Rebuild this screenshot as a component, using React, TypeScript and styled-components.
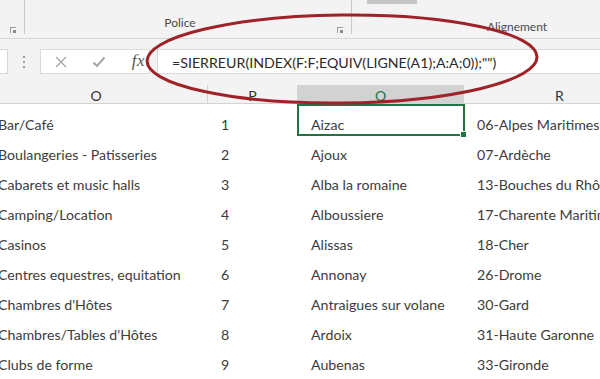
import styled, { createGlobalStyle } from 'styled-components';

const GlobalStyle = createGlobalStyle`
  html, body {
    margin: 0;
    padding: 0;
    background: #ffffff;
    overflow: hidden;
  }
  * {
    box-sizing: border-box;
  }
`;

const FONT = `Lato, 'Noto Sans', 'Liberation Sans', sans-serif`;

const Page = styled.div`
  position: relative;
  width: 600px;
  height: 379px;
  overflow: hidden;
  background: #ffffff;
  font-family: ${FONT};
`;

//------ ribbon

const Ribbon = styled.div`
  display: flex;
  height: 39px;
  background: #f3f3f3;
  border-bottom: 1px solid #d8d8d8;
`;

const RibbonGroup = styled.div<{ $width: number; $last?: boolean }>`
  position: relative;
  flex: 0 0 ${(p) => p.$width}px;
  display: flex;
  flex-direction: column;
  justify-content: flex-end;
  align-items: center;
  padding-bottom: 5px;
  border-right: ${(p) => (p.$last ? 'none' : '1px solid #c8c8c8')};
  margin: ${(p) => (p.$last ? '0' : '0 0 4px 0')};
`;

const GroupLabel = styled.span<{ $shift?: number }>`
  font-size: 12px;
  color: #4a4a4a;
  line-height: 12px;
  transform: translateX(${(p) => p.$shift ?? 0}px);
`;

const Launcher = styled.span`
  position: absolute;
  right: 8px;
  bottom: 1px;
  width: 6px;
  height: 6px;
  border-left: 1px solid #9a9a9a;
  border-top: 1px solid #9a9a9a;
  &::after {
    content: '';
    position: absolute;
    right: 0;
    bottom: 0;
    width: 3px;
    height: 3px;
    background: #8a8a8a;
  }
`;

const ButtonStub = styled.div`
  position: absolute;
  top: 0;
  left: 15px;
  width: 50px;
  height: 4px;
  background: #c6c6c6;
`;

//------ formula bar

const FormulaBar = styled.div`
  display: flex;
  align-items: center;
  height: 46px;
  padding: 10px 0 11px;
  background: #f3f3f3;
`;

const NameBox = styled.div`
  flex: 0 0 8px;
  height: 25px;
  background: #ffffff;
  border: 1px solid #d6d6d6;
  border-left: none;
`;

const Grip = styled.div`
  flex: 0 0 32px;
  display: flex;
  flex-direction: column;
  align-items: center;
  gap: 3px;
  & > span {
    width: 2px;
    height: 2px;
    background: #9c9c9c;
  }
`;

const ButtonsBox = styled.div`
  flex: 0 0 110px;
  height: 25px;
  display: flex;
  align-items: center;
  justify-content: space-between;
  padding: 0 4px 0 14px;
  background: #ffffff;
  border: 1px solid #dadada;
`;

const Fx = styled.span`
  font-family: 'Liberation Serif', 'DejaVu Serif', serif;
  font-style: italic;
  font-size: 17px;
  color: #555;
  letter-spacing: 0.5px;
  margin-top: -2px;
`;

const FormulaInput = styled.div`
  flex: 1;
  height: 25px;
  margin-left: 7px;
  background: #ffffff;
  border: 1px solid #dadada;
  border-right: none;
  padding: 2px 0 0 14px;
  display: flex;
  align-items: center;
  font-size: 14.2px;
  color: #2b2b2b;
  white-space: nowrap;
`;

//------ grid

const COLS = '223px 90px 166px 192px';

const SheetGrid = styled.div`
  margin-left: -15px;
  width: 671px;
`;

const HeaderRow = styled.div`
  display: grid;
  grid-template-columns: ${COLS};
  height: 19px;
  background: #f3f3f3;
  border-bottom: 1px solid #d4d4d4;
`;

const ColHead = styled.div<{ $active?: boolean }>`
  display: flex;
  align-items: center;
  justify-content: center;
  padding-top: 3px;
  font-size: 14px;
  line-height: 1;
  color: ${(p) => (p.$active ? '#217346' : '#333333')};
  background: ${(p) => (p.$active ? '#d2d2d2' : 'transparent')};
  border-right: 1px solid #d4d4d4;
`;

const Row = styled.div`
  display: grid;
  grid-template-columns: ${COLS};
  height: 30px;
`;

const Cell = styled.div`
  position: relative;
  display: flex;
  align-items: flex-end;
  padding: 0 0 2px 13px;
  font-size: 14.2px;
  line-height: 1;
  color: #3c3c3c;
  white-space: nowrap;
`;

const Selection = styled.div`
  position: absolute;
  inset: 0 -1px -2px -1px;
  border: 2px solid #217346;
  pointer-events: none;
  &::after {
    content: '';
    position: absolute;
    right: -4px;
    bottom: -4px;
    width: 5px;
    height: 5px;
    background: #217346;
    border: 1px solid #ffffff;
  }
`;

const Annotation = styled.svg`
  position: absolute;
  left: 0;
  top: 0;
  pointer-events: none;
`;

const rows: [string, string, string, string][] = [
  ['Bar/Café', '1', 'Aizac', '06-Alpes Maritimes'],
  ['Boulangeries - Patisseries', '2', 'Ajoux', '07-Ardèche'],
  ['Cabarets et music halls', '3', 'Alba la romaine', '13-Bouches du Rhône'],
  ['Camping/Location', '4', 'Alboussiere', '17-Charente Maritime'],
  ['Casinos', '5', 'Alissas', '18-Cher'],
  ['Centres equestres, equitation', '6', 'Annonay', '26-Drome'],
  ["Chambres d'Hôtes", '7', 'Antraigues sur volane', '30-Gard'],
  ["Chambres/Tables d'Hôtes", '8', 'Ardoix', '31-Haute Garonne'],
  ['Clubs de forme', '9', 'Aubenas', '33-Gironde'],
];

export default function App() {
  return (
    <>
      <GlobalStyle />
      <Page>
        <Ribbon>
          <RibbonGroup $width={25}>
            <Launcher />
          </RibbonGroup>
          <RibbonGroup $width={327}>
            <GroupLabel $shift={-8}>Police</GroupLabel>
            <Launcher />
          </RibbonGroup>
          <RibbonGroup $width={330} $last>
            <ButtonStub />
            <GroupLabel>Alignement</GroupLabel>
          </RibbonGroup>
        </Ribbon>

        <FormulaBar>
          <NameBox />
          <Grip>
            <span />
            <span />
            <span />
          </Grip>
          <ButtonsBox>
            <svg width="12" height="12" viewBox="0 0 12 12">
              <path d="M1 1 L11 11 M11 1 L1 11" stroke="#a6a6a6" strokeWidth="1.3" fill="none" />
            </svg>
            <svg width="14" height="12" viewBox="0 0 14 12">
              <path d="M1.5 6.5 L5 10 L12.5 1.5" stroke="#a6a6a6" strokeWidth="2" fill="none" />
            </svg>
            <Fx>fx</Fx>
          </ButtonsBox>
          <FormulaInput>=SIERREUR(INDEX(F:F;EQUIV(LIGNE(A1);A:A;0));"")</FormulaInput>
        </FormulaBar>

        <SheetGrid>
          <HeaderRow>
            <ColHead>O</ColHead>
            <ColHead>P</ColHead>
            <ColHead $active>Q</ColHead>
            <ColHead>R</ColHead>
          </HeaderRow>
          {rows.map((r, i) => (
            <Row key={i}>
              <Cell>{r[0]}</Cell>
              <Cell>{r[1]}</Cell>
              <Cell>
                {r[2]}
                {i === 0 && <Selection />}
              </Cell>
              <Cell>{r[3]}</Cell>
            </Row>
          ))}
        </SheetGrid>

        <Annotation width="600" height="379" viewBox="0 0 600 379">
          <ellipse
            cx="342"
            cy="59"
            rx="195"
            ry="44"
            fill="none"
            stroke="#9e2227"
            strokeWidth="3"
            transform="rotate(-0.6 342 59)"
          />
        </Annotation>
      </Page>
    </>
  );
}
